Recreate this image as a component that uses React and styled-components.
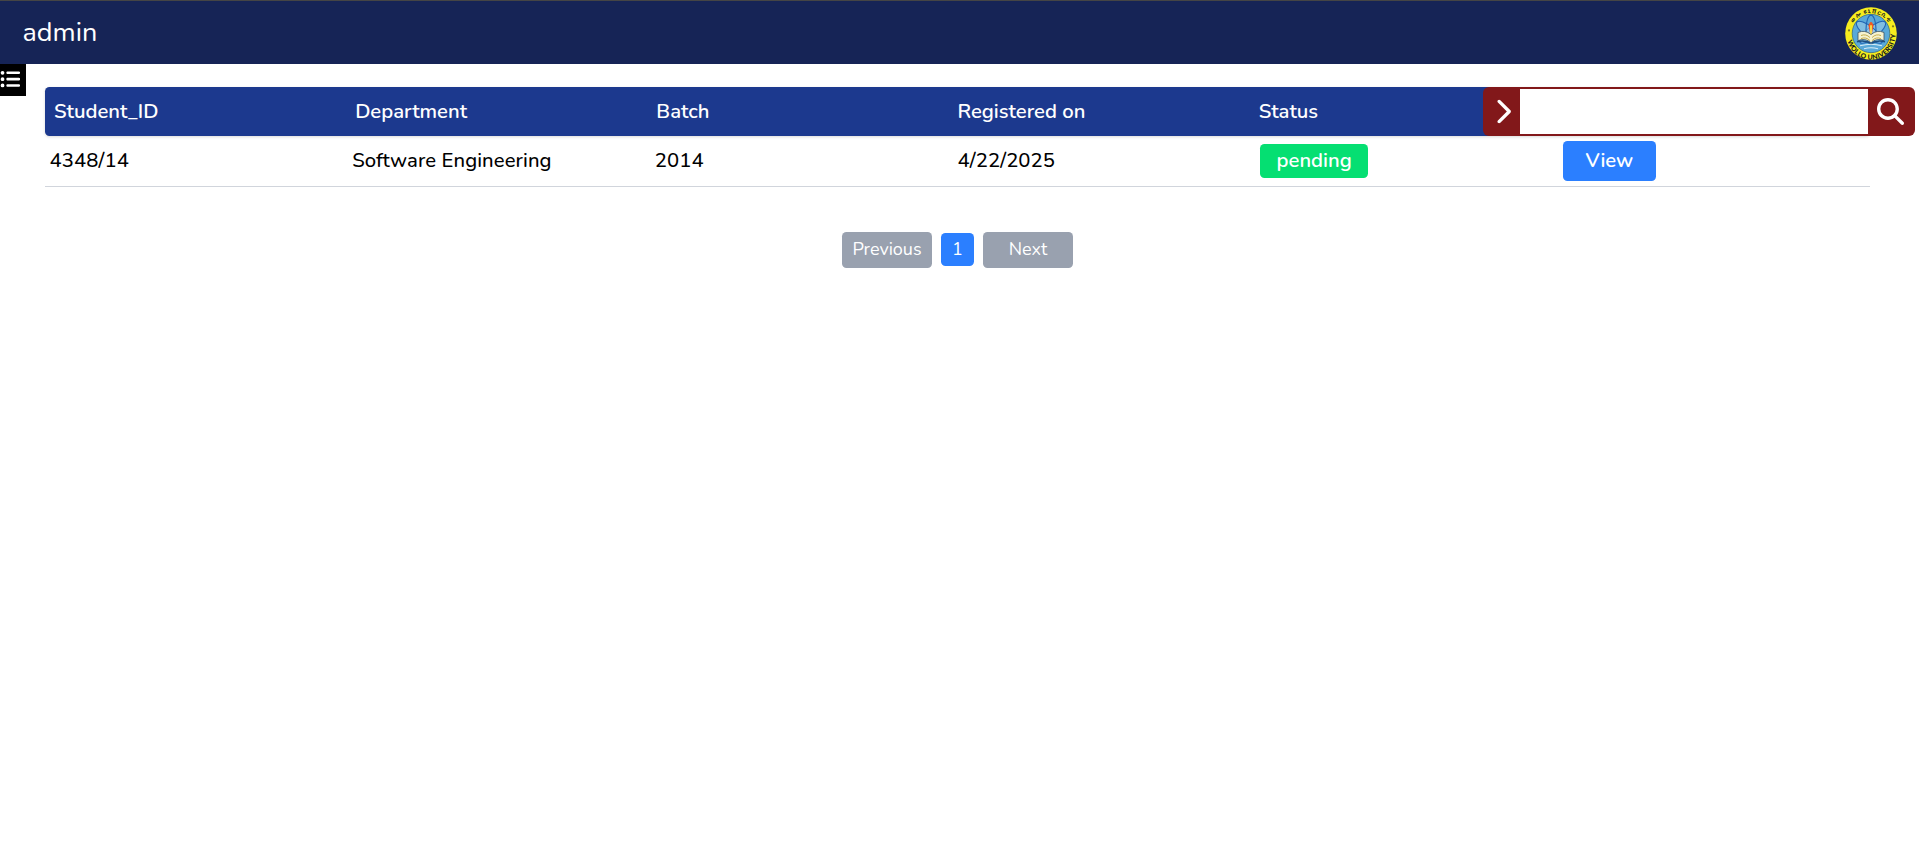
import React from "react";
import styled, { createGlobalStyle } from "styled-components";
import { FaMagnifyingGlass, FaChevronRight, FaListUl } from "react-icons/fa6";

const GlobalStyle = createGlobalStyle`
  * { box-sizing: border-box; }
  html { font-size: 18px; }
  body { margin: 0; background: #fff; color: #000; font-family: Nunito, Lato, "Open Sans", sans-serif; }
  button, input { font: inherit; border: 0; margin: 0; }
`;

const TopBar = styled.header`
  height: 64px;
  display: flex;
  align-items: center;
  justify-content: space-between;
  padding: 0 22.5px;
  background: #162456;
  border-top: 1px solid #454545;
  color: #fff;
`;
const UserName = styled.span`
  font-size: 27px;
  line-height: 36px;
`;
const Body = styled.div`
  display: flex;
  align-items: flex-start;
`;
const MenuButton = styled.button`
  width: 26px;
  height: 32px;
  padding: 0 0 1px;
  display: flex;
  align-items: center;
  background: #000;
  color: #fff;
  flex: none;
  svg { margin-left: -0.5px; }
`;
const Main = styled.main`
  flex: 1;
  padding: 23px 49px 0 19px;
`;
const HeadRow = styled.div`
  height: 49px;
  padding: 0 9px;
  display: grid;
  grid-template-columns: repeat(6, minmax(0, 1fr));
  align-items: center;
  background: #1c398e;
  color: #fff;
  border-radius: 4.5px;
  box-shadow: 0 1px 3px rgba(0, 0, 0, 0.15);
  font-size: 20.25px;
  font-weight: 600;
`;
const DataRow = styled.div`
  height: 51px;
  padding: 0 4.5px;
  display: grid;
  grid-template-columns: repeat(6, minmax(0, 1fr));
  align-items: center;
  border-bottom: 1px solid #d1d5dc;
  font-size: 20.25px;
  font-weight: 500;
  letter-spacing: 0.09px;
`;
const Cell = styled.span`
  white-space: nowrap;
  padding-bottom: ${(p) => p.$lift || 0}px;
`;
const SearchCell = styled.div`
  align-self: stretch;
  display: flex;
  margin: 0 -54px 0 -77px;
`;
const SearchBox = styled.div`
  flex: 1;
  display: flex;
  background: #82181a;
  border-radius: 6px;
  padding: 2px 0;
`;
const SearchInput = styled.input`
  width: 348px;
  padding: 0 9px;
  background: #fff;
  outline: none;
`;
const IconButton = styled.button`
  width: ${(p) => p.$w}px;
  padding: 0 ${(p) => p.$right || 0}px 1px ${(p) => p.$left || 0}px;
  display: flex;
  align-items: center;
  justify-content: center;
  background: transparent;
  color: #fff;
`;
const Badge = styled.span`
  display: flex;
  align-items: center;
  justify-content: center;
  width: 108px;
  height: 34px;
  padding-bottom: 2px;
  border-radius: 4.5px;
  background: #05df72;
  color: #fff;
  font-weight: 600;
  letter-spacing: 0;
`;
const ViewButton = styled.button`
  display: block;
  width: 93px;
  height: 40px;
  padding: 0 0 2px;
  border-radius: 4.5px;
  background: #2b7fff;
  color: #fff;
  font-weight: 600;
`;
const Pager = styled.nav`
  margin: 45px 0 0;
  display: flex;
  align-items: center;
  justify-content: center;
  gap: 9px;
`;
const PageButton = styled.button`
  width: ${(p) => (p.$active ? 33 : 90)}px;
  height: ${(p) => (p.$active ? 33 : 36)}px;
  margin-bottom: ${(p) => (p.$active ? 1 : 0)}px;
  padding: 0 0 ${(p) => (p.$active ? 1 : 2)}px;
  border-radius: 4.5px;
  background: ${(p) => (p.$active ? "#2b7fff" : "#99a1af")};
  color: #fff;
  font-size: 18px;
`;
const SealArt = styled.svg`
  width: 52px;
  height: 53px;
  margin-top: 2px;
`;

function Seal() {
  return (
    <SealArt viewBox="-26 -26 52 52" preserveAspectRatio="none">
      <defs>
        <path id="arcTop" d="M-20.4 0A20.4 20.4 0 0 1 20.4 0" />
        <path id="arcBottom" d="M-23.3 -6A24.4 24.4 0 1 0 23.3 -6" />
      </defs>
      <circle r="25.8" fill="#f6ec1e" />
      <circle r="18.8" fill="#5aa9d8" stroke="#3c6f86" strokeWidth=".8" />
      <g fill="none" stroke="#1f63b4" strokeWidth="1.1">
        <ellipse cy="-2" rx="5.5" ry="16" fill="#a8d3ea" fillOpacity=".5" transform="rotate(52)" />
        <ellipse cy="-2" rx="5.5" ry="16" fill="#a8d3ea" fillOpacity=".5" transform="rotate(-52)" />
        <ellipse cy="-4" rx="5" ry="14" />
      </g>
      <path d="M-2.5-8Q0-15 2.5-8L1 0H-1z" fill="#ef5a24" />
      <path d="M-1-8h2v10h-2z" fill="#f8d94a" />
      <path d="M-13-1Q-6-4 0 1Q6-4 13-1V7Q6 4 0 9Q-6 4-13 7z" fill="#f5f2d0" stroke="#3e5361" strokeWidth=".8" />
      <path d="M-10 2Q-5 0-1 4M10 2Q5 0 1 4M-10 5Q-5 3-1 7M10 5Q5 3 1 7" fill="none" stroke="#c2a63e" strokeWidth=".9" />
      <path d="M-14 8Q-6 6 0 10Q6 6 14 8" fill="none" stroke="#1d4f80" strokeWidth="1.5" />
      <path d="M-11 12Q0 9 11 12M-7 15Q0 13 7 15" fill="none" stroke="#d9edf7" strokeWidth="1.1" />
      <g fontFamily="Lato, 'Open Sans', sans-serif" fontWeight="900" fill="#14181c">
        <text fontSize="6.8" letterSpacing=".3"><textPath href="#arcBottom" startOffset="54%" textAnchor="middle">WOLLO UNIVERSITY</textPath></text>
        <text fontSize="6" letterSpacing="1"><textPath href="#arcTop" startOffset="50%" textAnchor="middle">ወሎ ዩኒቨርሲቲ</textPath></text>
      </g>
      <circle cx="-22" cy="-3" r="1.1" fill="#7d7a22" />
      <circle cx="22" cy="-7" r="1.1" fill="#7d7a22" />
    </SealArt>
  );
}

const columns = ["Student_ID", "Department", "Batch", "Registered on", "Status"];
const student = ["4348/14", "Software Engineering", "2014", "4/22/2025"];

export default function App() {
  return (
    <>
      <GlobalStyle />
      <TopBar>
        <UserName>admin</UserName>
        <Seal />
      </TopBar>
      <Body>
        <MenuButton aria-label="Menu"><FaListUl size={20.25} /></MenuButton>
        <Main>
          <HeadRow>
            {columns.map((c) => <Cell key={c} $lift={1}>{c}</Cell>)}
            <SearchCell>
              <SearchBox>
                <IconButton $w={37} $left={3} aria-label="Close search"><FaChevronRight size={27} /></IconButton>
                <SearchInput aria-label="Search" />
                <IconButton $w={47} $right={2} aria-label="Search"><FaMagnifyingGlass size={27} /></IconButton>
              </SearchBox>
            </SearchCell>
          </HeadRow>
          <DataRow>
            {student.map((v) => <Cell key={v} $lift={2}>{v}</Cell>)}
            <Cell><Badge>pending</Badge></Cell>
            <Cell><ViewButton>View</ViewButton></Cell>
          </DataRow>
          <Pager>
            <PageButton>Previous</PageButton>
            <PageButton $active>1</PageButton>
            <PageButton>Next</PageButton>
          </Pager>
        </Main>
      </Body>
    </>
  );
}
